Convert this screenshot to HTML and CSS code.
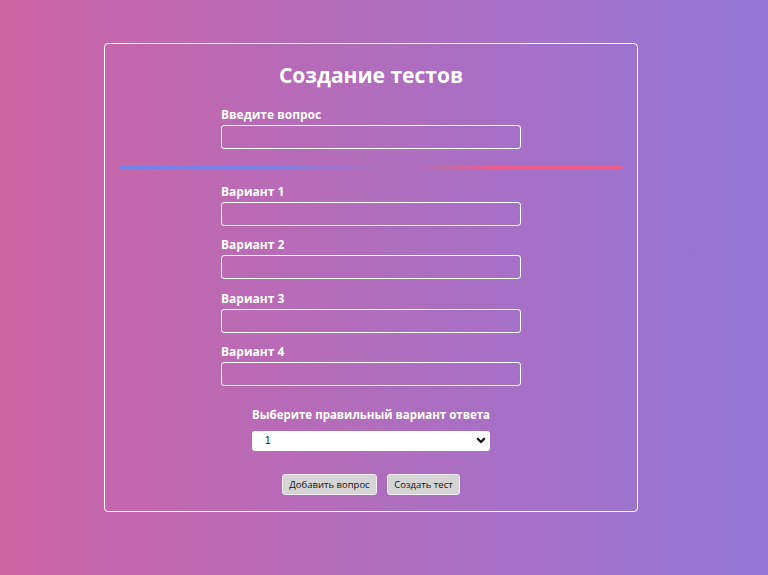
FILE: index.html
```html
<!DOCTYPE html>
<html lang="ru">
<head>
<meta charset="utf-8">
<title>Создание тестов</title>
<link rel="stylesheet" href="styles.css">
</head>
<body>
<div class="card">
  <h1 class="title">Создание тестов</h1>
  <div class="field">
    <label class="label">Введите вопрос</label>
    <input class="input" type="text">
  </div>
  <div class="divider"></div>
  <div class="variants">
    <div class="field">
      <label class="label">Вариант 1</label>
      <input class="input" type="text">
    </div>
    <div class="field">
      <label class="label">Вариант 2</label>
      <input class="input" type="text">
    </div>
    <div class="field">
      <label class="label">Вариант 3</label>
      <input class="input" type="text">
    </div>
    <div class="field">
      <label class="label">Вариант 4</label>
      <input class="input" type="text">
    </div>
  </div>
  <div class="choose">
    <label class="label">Выберите правильный вариант ответа</label>
    <div class="select">
      <span class="select-value">1</span>
      <svg class="chev" width="10" height="7" viewBox="0 0 10 7"><path d="M1.2 1.3 L5 5 L8.8 1.3" fill="none" stroke="#111" stroke-width="2.2"/></svg>
    </div>
  </div>
  <div class="buttons">
    <button class="btn btn-add">Добавить вопрос</button>
    <button class="btn btn-create">Создать тест</button>
  </div>
</div>
</body>
</html>
```
FILE: styles.css
```css
* { box-sizing: border-box; }
html, body { margin: 0; padding: 0; }
body {
  width: 768px;
  height: 575px;
  overflow: hidden;
  background: linear-gradient(to right, #cd64a4, #9376d7);
  font-family: "Open Sans", "Noto Sans", sans-serif;
  color: #fff;
}
.card {
  margin: 43px 0 0 104px;
  width: 534px;
  height: 469px;
  border: 1px solid #fff;
  border-radius: 4px;
  padding-top: 17px;
  display: flex;
  flex-direction: column;
  align-items: center;
}
.title {
  margin: 0;
  font-size: 21px;
  line-height: 28px;
  font-weight: 700;
}
.field {
  width: 300px;
  display: flex;
  flex-direction: column;
}
.card > .field { margin-top: 18px; }
.label {
  font-size: 12px;
  line-height: 16px;
  font-weight: 700;
  margin-bottom: 2px;
}
.input {
  height: 24px;
  width: 300px;
  border: 1px solid #fff;
  border-radius: 3px;
  background: transparent;
  margin: 0;
  padding: 0 6px;
}
.divider {
  margin-top: 17px;
  width: 504px;
  height: 3px;
  border-radius: 2px;
  background: linear-gradient(to right, #7680ea 0%, #7a80e6 30%, rgba(170,115,200,0) 52%, rgba(200,100,170,0) 58%, #ea5f8c 74%, #ec5e8b 100%);
}
.variants {
  margin-top: 15px;
  display: flex;
  flex-direction: column;
  gap: 11.4px;
}
.choose {
  margin-top: 20.5px;
  width: 238px;
  display: flex;
  flex-direction: column;
}
.choose .label { margin-bottom: 8px; font-size: 11.5px; white-space: nowrap; }
.select {
  height: 20px;
  background: #fff;
  border-radius: 3px;
  display: flex;
  align-items: center;
  justify-content: space-between;
  padding: 0 4px 0 13px;
}
.select-value {
  color: #111;
  font-family: "Liberation Sans", Arial, sans-serif;
  font-size: 10px;
}
.chev { display: block; }
.buttons {
  margin-top: 23px;
  display: flex;
  gap: 10px;
}
.btn {
  height: 21px;
  margin: 0;
  padding: 0;
  background: #d4d4d4;
  border: 1px solid #f3eef6;
  border-radius: 3px;
  color: #111;
  font-family: "Open Sans", sans-serif;
  font-size: 9.5px;
  line-height: 19px;
}
.btn-add { width: 95px; }
.btn-create { width: 73px; }
```
